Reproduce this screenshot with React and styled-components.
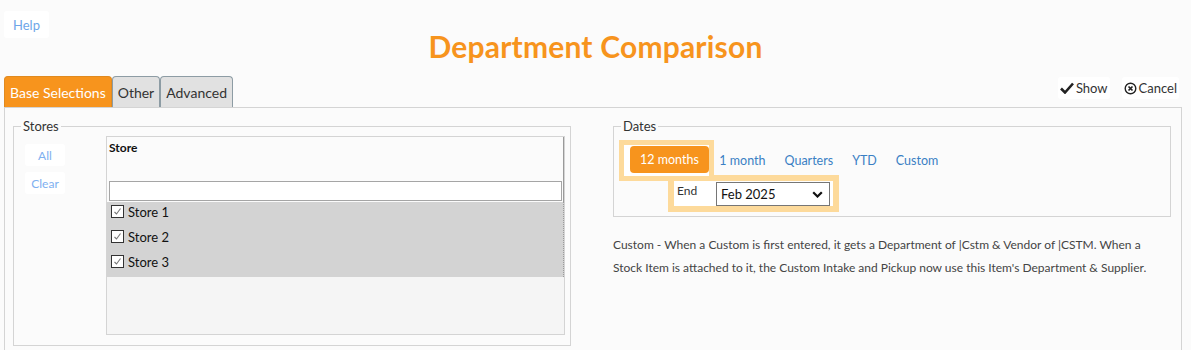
import React from "react";
import styled, { createGlobalStyle } from "styled-components";

const Global = createGlobalStyle`
  body {
    margin: 0;
    background: #fbfbfb;
    font-family: Lato, "Open Sans", sans-serif;
    color: #333;
  }
`;

const orange = "#f7941d";
const line = "#d4d4d4";

const Page = styled.div`
  width: 1191px;
  height: 350px;
  overflow: hidden;
`;

const Header = styled.header`
  display: grid;
  grid-template-columns: 1fr auto 1fr;
  align-items: start;
  padding: 11px 4px 0;
`;

const HelpButton = styled.button`
  justify-self: start;
  height: 27px;
  padding: 0 9px;
  border: none;
  border-radius: 3px;
  background: #fff;
  color: #6ea6e8;
  font-family: inherit;
  font-size: 13px;
`;

const Title = styled.h1`
  margin: 17px 0 0;
  font-size: 30px;
  line-height: 36px;
  font-weight: 700;
  letter-spacing: 0.2px;
  color: ${orange};
`;

const TabBar = styled.div`
  display: flex;
  justify-content: space-between;
  align-items: flex-start;
  margin-top: 12px;
  padding: 0 12px 0 4px;
`;

const Tabs = styled.div`
  display: flex;
`;

const Tab = styled.div`
  height: 30px;
  padding: 0 5px;
  display: flex;
  align-items: center;
  border: 1px solid #8d9ca4;
  border-bottom: none;
  border-radius: 4px 4px 0 0;
  font-size: 14px;
  background: ${p => (p.$active ? orange : "#e1e1e1")};
  color: ${p => (p.$active ? "#fff" : "#333")};
  border-color: ${p => (p.$active ? "#e08a20" : "#8d9ca4")};
`;

const Actions = styled.div`
  display: flex;
  gap: 12px;
  margin-top: 1px;
`;

const ActionButton = styled.button`
  display: flex;
  align-items: center;
  gap: 2px;
  height: 22px;
  padding: 0 2px;
  border: none;
  border-radius: 3px;
  background: #fff;
  color: #333;
  font-family: inherit;
  font-size: 13px;
`;

const Panel = styled.div`
  margin: 0 9px 0 4px;
  border: 1px solid ${line};
  border-bottom: none;
  padding: 11px 10px 40px 8px;
  display: grid;
  grid-template-columns: 1fr 1fr;
  column-gap: 42px;
  align-items: start;
`;

const Fieldset = styled.fieldset`
  margin: 0;
  min-width: 0;
  border: 1px solid ${line};
  padding: ${p => p.$pad};
`;

const Legend = styled.legend`
  margin-left: 2px;
  padding: 0 2px;
  font-size: 13px;
  line-height: 15px;
  color: #333;
`;

const StoresBody = styled.div`
  display: flex;
`;

const SideButtons = styled.div`
  width: 87px;
  display: flex;
  flex-direction: column;
  gap: 6px;
  padding: 8px 0 0 6px;
  box-sizing: border-box;
`;

const SmallButton = styled.button`
  width: 40px;
  height: 22px;
  border: none;
  border-radius: 3px;
  background: #fff;
  color: #7eb0f0;
  font-family: inherit;
  font-size: 12px;
  padding: 0;
`;

const Grid = styled.div`
  flex: 1;
  height: 199px;
  border: 1px solid ${line};
  background: #f5f5f5;
  box-sizing: border-box;
`;

const GridHead = styled.div`
  background: #fbfbfb;
  border-right: 1px solid #9a9a9a;
  padding: 2px 1px 1px 2px;
`;

const HeadLabel = styled.div`
  font-size: 12px;
  font-weight: 700;
  line-height: 18px;
  height: 42px;
  color: #111;
`;

const Filter = styled.input`
  display: block;
  width: 100%;
  height: 20px;
  box-sizing: border-box;
  border: 1px solid #a5a5a5;
  background: #fff;
  margin: 0;
`;

const Rows = styled.div`
  background: #d3d3d3;
  border-right: 1px dotted #9a9a9a;
`;

const Row = styled.div`
  height: 25px;
  box-sizing: border-box;
  display: flex;
  align-items: center;
  gap: 4px;
  padding: 0 0 6px 4px;
  font-size: 13px;
  line-height: 16px;
  color: #111;
`;

const Check = styled.span`
  width: 11px;
  height: 11px;
  border: 1px solid #333;
  background: #fff;
  display: flex;
  align-items: center;
  justify-content: center;
`;

const DatesRow = styled.div`
  display: flex;
  align-items: center;
`;

const Highlight = styled.div`
  display: flex;
  background: #fff;
  border: ${p => p.$border}px solid #fdda9b;
  padding: ${p => p.$pad};
  align-items: ${p => p.$align || "center"};
  width: fit-content;
`;

const RangeButton = styled.button`
  height: 27px;
  padding: 0 ${p => (p.$active ? 10 : 9.5)}px;
  border: none;
  border-radius: 4px;
  font-family: inherit;
  font-size: 12.5px;
  background: ${p => (p.$active ? orange : "transparent")};
  color: ${p => (p.$active ? "#fff" : "#3a7fc4")};
`;

const RangeLinks = styled.div`
  display: flex;
  margin-left: -4px;
`;

const EndRow = styled.div`
  margin: -6px 0 0 49px;
`;

const EndLabel = styled.span`
  font-size: 12px;
  line-height: 18px;
  width: 39px;
  color: #333;
`;

const Select = styled.div`
  width: 114px;
  height: 24px;
  box-sizing: border-box;
  border: 1px solid #767676;
  background: #fff;
  display: flex;
  align-items: center;
  justify-content: space-between;
  padding: 0 6px 0 4px;
  font-size: 13px;
  color: #111;
`;

const Note = styled.p`
  margin: 16px 0 0;
  font-size: 12px;
  line-height: 23px;
  color: #444;
`;

const CheckIcon = () => (
  <svg width="14" height="12" viewBox="0 0 14 12">
    <path d="M1 6.5 L5 10.5 L13 1.5" fill="none" stroke="#222" strokeWidth="2.6" />
  </svg>
);

const CancelIcon = () => (
  <svg width="13" height="13" viewBox="0 0 13 13">
    <circle cx="6.5" cy="6.5" r="5.3" fill="none" stroke="#222" strokeWidth="1.4" />
    <path d="M4.5 4.5 L8.5 8.5 M8.5 4.5 L4.5 8.5" stroke="#222" strokeWidth="1.7" />
  </svg>
);

const TickMark = () => (
  <svg width="9" height="9" viewBox="0 0 9 9">
    <path d="M1.5 5 L3.5 7 L7.5 1.5" fill="none" stroke="#777" strokeWidth="1.1" />
  </svg>
);

const Chevron = () => (
  <svg width="11" height="7" viewBox="0 0 11 7">
    <path d="M1.2 1.2 L5.5 5.5 L9.8 1.2" fill="none" stroke="#111" strokeWidth="2.2" />
  </svg>
);

const stores = ["Store 1", "Store 2", "Store 3"];
const ranges = ["12 months", "1 month", "Quarters", "YTD", "Custom"];

export default function App() {
  return (
    <Page>
      <Global />
      <Header>
        <HelpButton>Help</HelpButton>
        <Title>Department Comparison</Title>
      </Header>

      <TabBar>
        <Tabs>
          <Tab $active>Base Selections</Tab>
          <Tab>Other</Tab>
          <Tab>Advanced</Tab>
        </Tabs>
        <Actions>
          <ActionButton>
            <CheckIcon />
            Show
          </ActionButton>
          <ActionButton>
            <CancelIcon />
            Cancel
          </ActionButton>
        </Actions>
      </TabBar>

      <Panel>
        <Fieldset $pad="2px 5px 10px 5px">
          <Legend>Stores</Legend>
          <StoresBody>
            <SideButtons>
              <SmallButton>All</SmallButton>
              <SmallButton>Clear</SmallButton>
            </SideButtons>
            <Grid>
              <GridHead>
                <HeadLabel>Store</HeadLabel>
                <Filter />
              </GridHead>
              <Rows>
                {stores.map(s => (
                  <Row key={s}>
                    <Check>
                      <TickMark />
                    </Check>
                    {s}
                  </Row>
                ))}
              </Rows>
            </Grid>
          </StoresBody>
        </Fieldset>

        <div>
          <Fieldset $pad="6px 5px 4px 5px">
            <Legend>Dates</Legend>
            <DatesRow>
              <Highlight $border={5} $pad="1px 0 3px 6px">
                <RangeButton $active>{ranges[0]}</RangeButton>
              </Highlight>
              <RangeLinks>
                {ranges.slice(1).map(r => (
                  <RangeButton key={r}>{r}</RangeButton>
                ))}
              </RangeLinks>
            </DatesRow>
            <EndRow>
              <Highlight $border={6} $pad="1px 3px 0 3px" $align="flex-start">
                <EndLabel>End</EndLabel>
                <Select>
                  Feb 2025
                  <Chevron />
                </Select>
              </Highlight>
            </EndRow>
          </Fieldset>
          <Note>
            Custom - When a Custom is first entered, it gets a Department of
            |Cstm &amp; Vendor of |CSTM. When a Stock Item is attached to it, the
            Custom Intake and Pickup now use this Item's Department &amp; Supplier.
          </Note>
        </div>
      </Panel>
    </Page>
  );
}
